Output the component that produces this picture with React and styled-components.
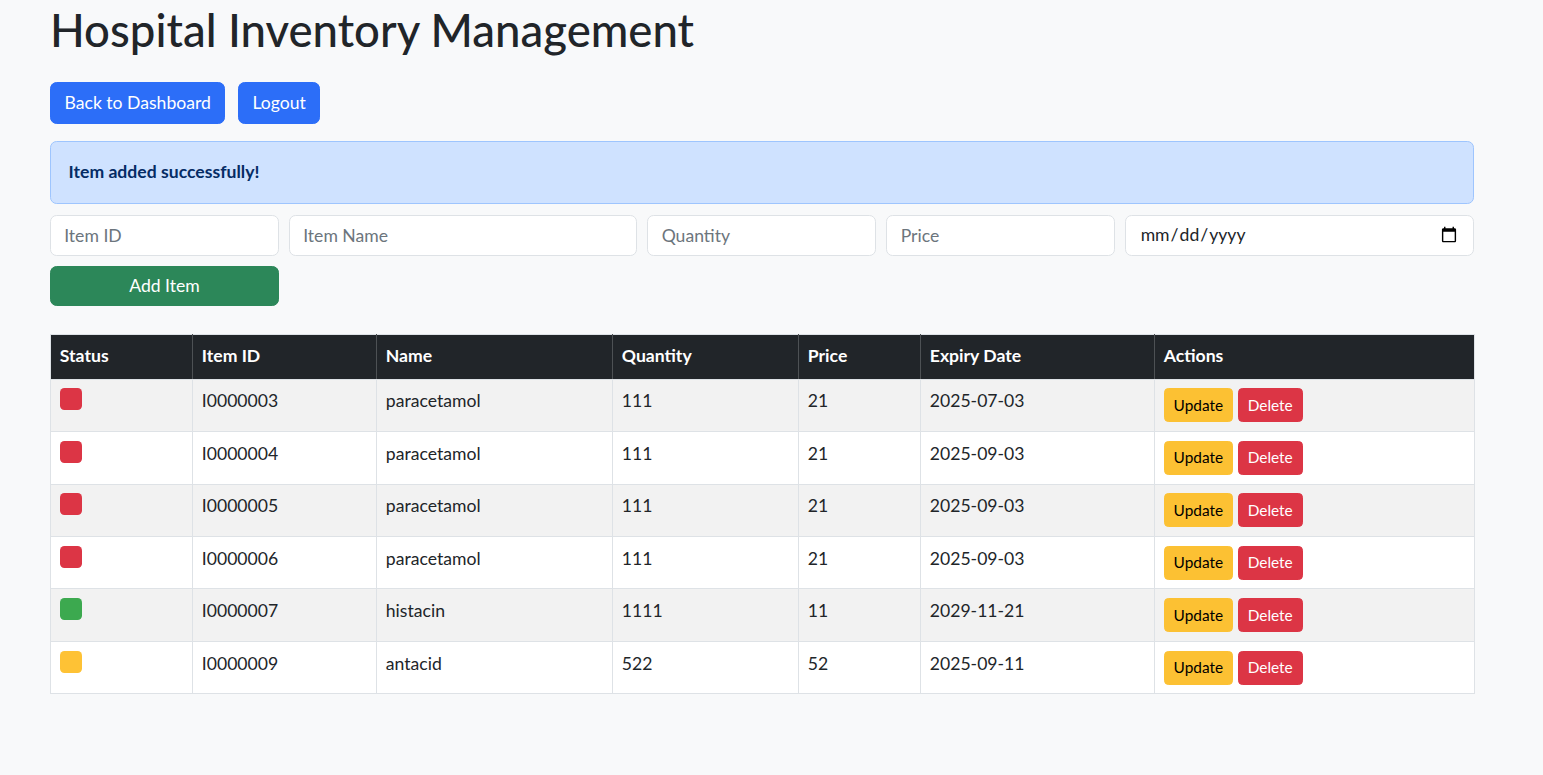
import React from "react";
import styled, { createGlobalStyle } from "styled-components";

const GlobalStyle = createGlobalStyle`
  *, *::before, *::after { box-sizing: border-box; }
  body {
    margin: 0;
    background: #f8f9fa;
    color: #212529;
    font-family: Lato, "Liberation Sans", sans-serif;
    font-size: 17.6px;
    line-height: 1.5;
  }
`;

const Page = styled.div`
  width: 1424px;
  margin-left: 50px;
`;

const Title = styled.h1`
  margin: 0 0 24.4px;
  padding-top: 3px;
  font-size: 45.5px;
  font-weight: 500;
  line-height: 1.2;
  color: #212529;
`;

const NavRow = styled.div`
  display: flex;
  gap: 12.5px;
  margin-bottom: 17.6px;
`;

const Button = styled.button`
  font-family: inherit;
  font-size: ${(p) => (p.$small ? "15.4px" : "17.6px")};
  line-height: 1.5;
  padding: ${(p) => (p.$small ? "4.4px 8.8px" : "6.6px 13.5px")};
  border-radius: ${(p) => (p.$small ? "4.4px" : "6.6px")};
  border: 1px solid ${(p) => p.$bg};
  background: ${(p) => p.$bg};
  color: ${(p) => p.$fg || "#fff"};
  cursor: pointer;
  white-space: nowrap;
  width: ${(p) => p.$width || "auto"};
  height: ${(p) => p.$height || "auto"};
`;

const Alert = styled.div`
  padding: 17px 17.6px;
  background: #cfe2ff;
  border: 1px solid #9ec5fe;
  border-radius: 6.6px;
  color: #052c65;
  font-weight: 700;
  margin-bottom: 11px;
`;

const FormGrid = styled.form`
  display: grid;
  grid-template-columns:
    calc((100% + 10px) / 6 - 10px)
    calc((100% + 10px) / 4 - 10px)
    calc((100% + 10px) / 6 - 10px)
    calc((100% + 10px) / 6 - 10px)
    calc((100% + 10px) / 4 - 10px);
  column-gap: 10px;
  row-gap: 10px;
  margin-bottom: 28px;
`;

const Input = styled.input`
  display: block;
  width: 100%;
  height: 41px;
  font-family: inherit;
  font-size: 17.6px;
  line-height: 1.5;
  padding: 0 13.2px;
  color: #212529;
  background: #fff;
  border: 1px solid #dee2e6;
  border-radius: 6.6px;
  outline: none;
  &::placeholder { color: #6c757d; }
  &::-webkit-datetime-edit { color: #212529; }
`;

const Table = styled.table`
  width: 100%;
  border-collapse: collapse;
  table-layout: fixed;
  vertical-align: top;
  border: 1px solid #dee2e6;
`;

const HeadCell = styled.th`
  background: #212529;
  color: #fff;
  font-weight: 700;
  text-align: left;
  padding: 8.8px;
  border: 1px solid #4d5154;
  border-bottom-color: #dee2e6;
  border-top-color: #dee2e6;
  &:first-child { border-left-color: #dee2e6; }
  &:last-child { border-right-color: #dee2e6; }
`;

const Row = styled.tr`
  background: ${(p) => (p.$striped ? "#f2f2f2" : "#fff")};
`;

const Cell = styled.td`
  padding: 8.8px;
  border: 1px solid #dee2e6;
  vertical-align: top;
  color: #212529;
`;

const StatusDot = styled.div`
  width: 22px;
  height: 22px;
  border-radius: 4.4px;
  background: ${(p) => p.$color};
`;

const Actions = styled.div`
  display: flex;
  gap: 5px;
`;

const columns = [
  { label: "Status", w: 142 },
  { label: "Item ID", w: 184 },
  { label: "Name", w: 236 },
  { label: "Quantity", w: 186 },
  { label: "Price", w: 122 },
  { label: "Expiry Date", w: 234 },
  { label: "Actions", w: 320 },
];

const RED = "#dc3545";
const GREEN = "#3ca94f";
const YELLOW = "#fec235";

const items = [
  { status: RED, id: "I0000003", name: "paracetamol", qty: "111", price: "21", exp: "2025-07-03" },
  { status: RED, id: "I0000004", name: "paracetamol", qty: "111", price: "21", exp: "2025-09-03" },
  { status: RED, id: "I0000005", name: "paracetamol", qty: "111", price: "21", exp: "2025-09-03" },
  { status: RED, id: "I0000006", name: "paracetamol", qty: "111", price: "21", exp: "2025-09-03" },
  { status: GREEN, id: "I0000007", name: "histacin", qty: "1111", price: "11", exp: "2029-11-21" },
  { status: YELLOW, id: "I0000009", name: "antacid", qty: "522", price: "52", exp: "2025-09-11" },
];

export default function App() {
  return (
    <>
      <GlobalStyle />
      <Page>
        <Title>Hospital Inventory Management</Title>
        <NavRow>
          <Button $bg="#2c6ef8">Back to Dashboard</Button>
          <Button $bg="#2c6ef8">Logout</Button>
        </NavRow>
        <Alert>Item added successfully!</Alert>
        <FormGrid onSubmit={(e) => e.preventDefault()}>
          <Input placeholder="Item ID" />
          <Input placeholder="Item Name" />
          <Input placeholder="Quantity" />
          <Input placeholder="Price" />
          <Input type="date" />
          <Button $bg="#2c8759" $width="100%" $height="40px" type="submit">Add Item</Button>
        </FormGrid>
        <Table>
          <colgroup>
            {columns.map((c) => (
              <col key={c.label} style={{ width: c.w }} />
            ))}
          </colgroup>
          <thead>
            <tr>
              {columns.map((c) => (
                <HeadCell key={c.label}>{c.label}</HeadCell>
              ))}
            </tr>
          </thead>
          <tbody>
            {items.map((it, i) => (
              <Row key={it.id} $striped={i % 2 === 0}>
                <Cell><StatusDot $color={it.status} /></Cell>
                <Cell>{it.id}</Cell>
                <Cell>{it.name}</Cell>
                <Cell>{it.qty}</Cell>
                <Cell>{it.price}</Cell>
                <Cell>{it.exp}</Cell>
                <Cell>
                  <Actions>
                    <Button $small $bg="#fcc133" $fg="#000">Update</Button>
                    <Button $small $bg={RED}>Delete</Button>
                  </Actions>
                </Cell>
              </Row>
            ))}
          </tbody>
        </Table>
      </Page>
    </>
  );
}
